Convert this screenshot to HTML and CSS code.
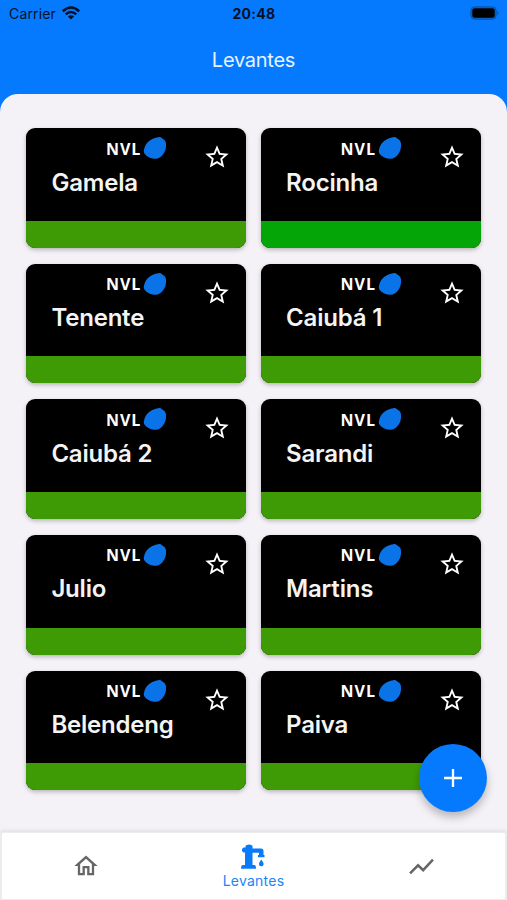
FILE: index.html
```
<!DOCTYPE html>
<html lang="pt-BR">
<head>
<meta charset="utf-8">
<title>Levantes</title>
<link rel="stylesheet" href="styles.css">
</head>
<body>
<svg class="defs" width="0" height="0">
  <symbol id="drop" viewBox="0 0 24 24"><path d="M16.500 1C11 1.500 7 3.500 4 7C2 9.500 1.300 12 .8 14.500C.5 16.500 1.500 18 3.500 19.800C6.500 22 9 23 12.500 22.800C15.500 22.600 18 21 20 18.500C22.500 15.500 23.300 11.500 23 7.500C22.800 5 21 3.300 19 2.200C18 1.600 17.300 1 16.500 1Z" fill="#0b73e8"/></symbol>
  <symbol id="star" viewBox="0 0 24 24"><path d="M22 9.240l-7.190-.62L12 2 9.190 8.630 2 9.240l5.460 4.730L5.820 21 12 17.270 18.180 21l-1.630-7.030L22 9.240zM12 15.400l-3.760 2.270 1-4.280-3.320-2.880 4.380-.38L12 6.100l1.710 4.040 4.380.38-3.320 2.880 1 4.280L12 15.400z" fill="#fff"/></symbol>
</svg>
<div class="app">
  <div class="status">
    <div class="carrier"><span>Carrier</span>
      <svg class="wifi" viewBox="0 0 18 14"><g fill="none" stroke="#001126" stroke-width="2.600"><path d="M.8 5.300Q9-2.300 17.200 5.300M3.700 8.400Q9 3.600 14.300 8.400"/></g><path d="M5.900 10.600Q9 7.700 12.100 10.600L9 13.600Z" fill="#001126"/></svg>
    </div>
    <div class="time">20:48</div>
    <svg class="battery" viewBox="0 0 30 14"><rect x=".8" y=".8" width="25.400" height="12.400" rx="3.800" fill="#0563cb" stroke="#0556b0"/><rect x="2.300" y="2.300" width="22.400" height="9.400" rx="2.300" fill="#000"/><path d="M27.500 4.700Q30 7 27.500 9.300Z" fill="#0556b0"/></svg>
  </div>
  <header class="header">Levantes</header>
  <main class="sheet">
    <div class="grid">
      <article class="card"><div class="logo"><span>NVL</span><svg><use href="#drop"/></svg></div><svg class="star"><use href="#star"/></svg><h2>Gamela</h2><div class="band"></div></article>
      <article class="card"><div class="logo"><span>NVL</span><svg><use href="#drop"/></svg></div><svg class="star"><use href="#star"/></svg><h2>Rocinha</h2><div class="band bright"></div></article>
      <article class="card"><div class="logo"><span>NVL</span><svg><use href="#drop"/></svg></div><svg class="star"><use href="#star"/></svg><h2>Tenente</h2><div class="band"></div></article>
      <article class="card"><div class="logo"><span>NVL</span><svg><use href="#drop"/></svg></div><svg class="star"><use href="#star"/></svg><h2>Caiubá 1</h2><div class="band"></div></article>
      <article class="card"><div class="logo"><span>NVL</span><svg><use href="#drop"/></svg></div><svg class="star"><use href="#star"/></svg><h2>Caiubá 2</h2><div class="band"></div></article>
      <article class="card"><div class="logo"><span>NVL</span><svg><use href="#drop"/></svg></div><svg class="star"><use href="#star"/></svg><h2>Sarandi</h2><div class="band"></div></article>
      <article class="card"><div class="logo"><span>NVL</span><svg><use href="#drop"/></svg></div><svg class="star"><use href="#star"/></svg><h2>Julio</h2><div class="band"></div></article>
      <article class="card"><div class="logo"><span>NVL</span><svg><use href="#drop"/></svg></div><svg class="star"><use href="#star"/></svg><h2>Martins</h2><div class="band"></div></article>
      <article class="card"><div class="logo"><span>NVL</span><svg><use href="#drop"/></svg></div><svg class="star"><use href="#star"/></svg><h2>Belendeng</h2><div class="band"></div></article>
      <article class="card"><div class="logo"><span>NVL</span><svg><use href="#drop"/></svg></div><svg class="star"><use href="#star"/></svg><h2>Paiva</h2><div class="band"></div></article>
    </div>
  </main>
  <button class="fab" aria-label="+"><svg viewBox="0 0 18 18"><path d="M9 0V18M0 9H18" stroke="#fff" stroke-width="2.300"/></svg></button>
  <nav class="tabs">
    <a class="tab"><svg class="home" viewBox="0 0 24 24"><path d="M12 5.690l5 4.500V18h-2v-6H9v6H7v-7.810l5-4.500M12 3L2 12h3v8h6v-6h2v6h6v-8h3L12 3z" fill="#666"/></svg></a>
    <a class="tab active"><svg class="pump" viewBox="0 0 26 26"><g fill="#087bfa"><path d="M5.500 2Q6 .5 9 .5T12.500 2V4.500H21Q23.500 4.500 23.500 7V11H24.500V13.200H18V11H19V8.700H12.500V21H14.500Q16 21.200 16 24.800H1Q1 21.200 2.800 21H5V8.500H3.500L2 7V5L3.500 3.500H5.500Z"/><path d="M21.300 15.500Q24 19 23.600 20.500A2.350 2.350 0 0 1 19 20.500Q18.600 19 21.300 15.500Z"/></g></svg><span>Levantes</span></a>
    <a class="tab"><svg class="chart" viewBox="0 0 24 16"><path d="M1 14.500L8.700 6.800L13.600 11.500L23 1.500" fill="none" stroke="#666" stroke-width="2.400"/></svg></a>
  </nav>
</div>
</body>
</html>
```
FILE: styles.css
```
* { box-sizing: border-box; }
body { margin: 0; font-family: Inter, "Liberation Sans", sans-serif; }
.defs { position: absolute; }
.app {
  position: relative;
  width: 507px;
  height: 900px;
  overflow: hidden;
  display: flex;
  flex-direction: column;
  background: linear-gradient(#067aff 200px, #f4f2f6 200px);
}
.status {
  height: 28px;
  display: grid;
  grid-template-columns: 1fr auto 1fr;
  align-items: center;
  padding: 0 7px 1px 9px;
  color: #001126;
  font-size: 14px;
}
.carrier { display: flex; align-items: center; gap: 6px; letter-spacing: .15px; }
.wifi { width: 18px; height: 14px; margin-top: -1px; }
.time { font-weight: 700; letter-spacing: .3px; margin-left: -1px; }
.battery { width: 30px; height: 14px; justify-self: end; margin-top: -1px; }
.header {
  height: 66px;
  line-height: 64px;
  text-align: center;
  font-size: 20px;
  letter-spacing: -.25px;
  color: #e6f3ff;
}
.sheet {
  height: 738px;
  flex: none;
  background: #f4f2f6;
  border-radius: 18px 18px 0 0;
  padding: 34px 26px 0 26.400px;
}
.grid {
  display: grid;
  grid-template-columns: 220px 220px;
  gap: 16px 14.700px;
  grid-auto-rows: 119.650px;
}
.card {
  position: relative;
  display: flex;
  flex-direction: column;
  background: #000;
  border-radius: 9px;
  overflow: hidden;
  box-shadow: 0 2px 4px rgba(0, 0, 0, .25);
}
.logo {
  display: flex;
  align-items: center;
  height: 24px;
  margin: 8px 0 0 79.500px;
  color: #fff;
  font: 700 16px/24px "Open Sans", sans-serif;
}
.logo span { width: 37px; padding-top: 1px; letter-spacing: 1px; }
.logo svg { width: 24px; height: 24px; }
.star { position: absolute; left: 177px; top: 15px; width: 28px; height: 28px; }
.card h2 {
  margin: 7.500px 0 0 25px;
  font-size: 24px;
  line-height: 30px;
  font-weight: 600;
  letter-spacing: -.2px;
  color: #f4f4f4;
}
.band { height: 27px; margin-top: auto; background: #3f9b05; }
.band.bright { background: #03a507; }
.fab {
  position: absolute;
  left: 419px;
  top: 744px;
  width: 68px;
  height: 68px;
  padding: 0;
  border: 0;
  border-radius: 50%;
  background: #067aff;
  display: flex;
  align-items: center;
  justify-content: center;
  box-shadow: 0 5px 9px rgba(0, 0, 0, .25);
}
.fab svg { width: 18px; height: 18px; }
.tabs {
  flex: 1;
  display: grid;
  grid-template-columns: repeat(3, 1fr);
  background: #fff;
  border: 1px solid #ececee;
  border-width: 1px 2px;
  border-radius: 3px;
  box-shadow: 0 -1px 4px rgba(0, 0, 0, .1);
}
.tab { display: flex; flex-direction: column; align-items: center; justify-content: center; }
.active { color: #2184f5; font-size: 14px; line-height: 17px; letter-spacing: .25px; }
.pump { width: 26px; height: 26px; margin-bottom: 2px; }
.home { width: 28px; height: 28px; }
.chart { width: 25px; height: 17px; }
```
